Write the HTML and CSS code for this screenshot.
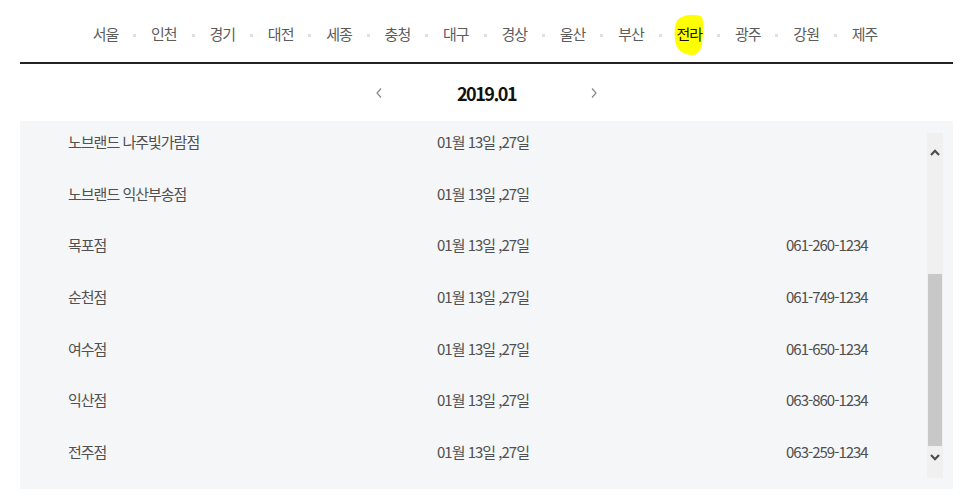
FILE: index.html
```html
<!DOCTYPE html>
<html lang="ko">
<head>
<meta charset="utf-8">
<title>매장 휴무일</title>
<link rel="stylesheet" href="styles.css">
</head>
<body>
<div class="wrap">
  <nav class="regions">
    <a class="region">서울</a><span class="dot"></span>
    <a class="region">인천</a><span class="dot"></span>
    <a class="region">경기</a><span class="dot"></span>
    <a class="region">대전</a><span class="dot"></span>
    <a class="region">세종</a><span class="dot"></span>
    <a class="region">충청</a><span class="dot"></span>
    <a class="region">대구</a><span class="dot"></span>
    <a class="region">경상</a><span class="dot"></span>
    <a class="region">울산</a><span class="dot"></span>
    <a class="region">부산</a><span class="dot"></span>
    <a class="region active"><svg class="marker" viewBox="0 0 30 42" width="30" height="42"><path d="M8 3 C14 0 24 0 28 3 C30 10 29 22 28 30 C27 36 24 41 18 41 C12 41 6 38 3 33 C0 26 0 14 2 9 C3 6 5 4 8 3 Z" fill="#ffff00"/></svg><span class="label">전라</span></a><span class="dot"></span>
    <a class="region">광주</a><span class="dot"></span>
    <a class="region">강원</a><span class="dot"></span>
    <a class="region">제주</a>
  </nav>
  <div class="month">
    <svg class="chev" width="6" height="10" viewBox="0 0 6 10"><path d="M5 0.5 L1 5 L5 9.5" fill="none" stroke="#888" stroke-width="1.2"/></svg>
    <span class="month-label">2019.01</span>
    <svg class="chev" width="6" height="10" viewBox="0 0 6 10"><path d="M1 0.5 L5 5 L1 9.5" fill="none" stroke="#888" stroke-width="1.2"/></svg>
  </div>
  <div class="box">
    <div class="list">
      <div class="row"><span>노브랜드 나주빛가람점</span><span>01월 13일 ,27일</span><span></span></div>
      <div class="row"><span>노브랜드 익산부송점</span><span>01월 13일 ,27일</span><span></span></div>
      <div class="row"><span>목포점</span><span>01월 13일 ,27일</span><span>061-260-1234</span></div>
      <div class="row"><span>순천점</span><span>01월 13일 ,27일</span><span>061-749-1234</span></div>
      <div class="row"><span>여수점</span><span>01월 13일 ,27일</span><span>061-650-1234</span></div>
      <div class="row"><span>익산점</span><span>01월 13일 ,27일</span><span>063-860-1234</span></div>
      <div class="row"><span>전주점</span><span>01월 13일 ,27일</span><span>063-259-1234</span></div>
    </div>
    <div class="scrollbar">
      <div class="sb-btn sb-up"><svg width="10" height="7" viewBox="0 0 10 7"><path d="M1 6 L5 1.8 L9 6" fill="none" stroke="#4d4d4d" stroke-width="2.2"/></svg></div>
      <div class="sb-space"></div>
      <div class="sb-thumb"></div>
      <div class="sb-btn sb-down"><svg width="10" height="7" viewBox="0 0 10 7"><path d="M1 1 L5 5.2 L9 1" fill="none" stroke="#4d4d4d" stroke-width="2.2"/></svg></div>
    </div>
  </div>
</div>
</body>
</html>
```
FILE: styles.css
```css
* { box-sizing: border-box; }
html, body { margin: 0; padding: 0; background: #fff; }
body {
  font-family: "Noto Sans CJK KR", "Noto Sans", sans-serif;
  color: #555;
}
.wrap {
  margin: 0 13px 0 20px;
}
.regions {
  display: flex;
  justify-content: center;
  align-items: center;
  gap: 14.9px;
  padding: 24px 3px 18px 0;
  border-bottom: 2px solid #222;
  line-height: 20px;
}
.region {
  font-size: 15px;
  letter-spacing: -1px;
  color: #5c5c5c;
  position: relative;
  white-space: nowrap;
}
.region.active { color: #111; }
.region .label { position: relative; }
.marker {
  position: absolute;
  left: -3px;
  top: -10px;
}
.dot {
  width: 3px;
  height: 3px;
  background: #e0e0e0;
  margin-top: 2px;
}
.month {
  height: 57px;
  display: flex;
  justify-content: center;
  align-items: center;
  gap: 75px;
}
.chev { display: block; }
.month-label {
  font-size: 18px;
  font-weight: 700;
  letter-spacing: -1.5px;
  color: #111;
  line-height: 20px;
}
.box {
  height: 368px;
  background: #f5f6f8;
  display: flex;
  overflow: hidden;
}
.list {
  flex: 1;
  padding-left: 48px;
}
.row {
  display: grid;
  grid-template-columns: 369px 349px 1fr;
  height: 51.67px;
  padding-top: 11px;
  line-height: 20px;
  font-size: 15px;
  letter-spacing: -1px;
  color: #505050;
}
.scrollbar {
  width: 16px;
  margin: 12px 10px 11px 0;
  background: #f0f0f0;
  display: flex;
  flex-direction: column;
}
.sb-btn {
  display: flex;
  justify-content: center;
}
.sb-up { height: 38px; align-items: center; }
.sb-space { height: 103px; }
.sb-thumb {
  height: 172px;
  margin: 0 1px;
  background: #c8c8c8;
}
.sb-down { flex: 1; align-items: flex-start; padding-top: 8px; }
```
